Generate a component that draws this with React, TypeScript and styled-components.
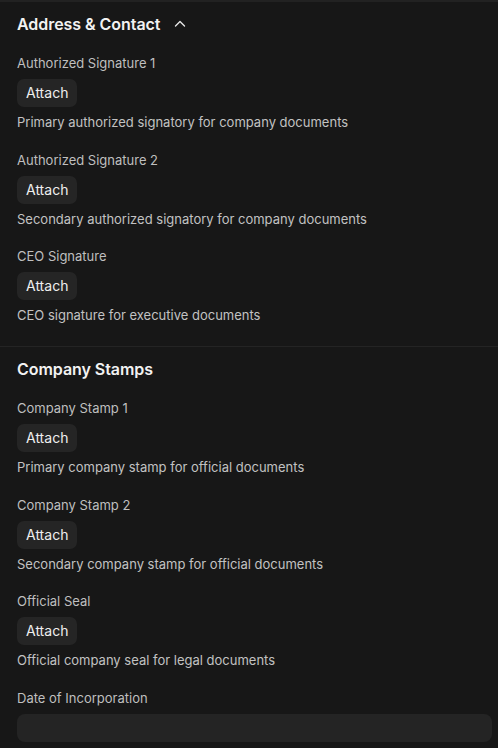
import React from "react";
import styled, { createGlobalStyle } from "styled-components";

const Global = createGlobalStyle`
  html, body { margin: 0; padding: 0; background: #171717; }
  body { font-family: Inter, "Noto Sans", sans-serif; -webkit-font-smoothing: antialiased; }
  * { box-sizing: border-box; }
`;

const Page = styled.div`
  min-height: 748px;
  background: #171717;
  border-top: 2px solid #222222;
`;

const Section = styled.section<{ $last?: boolean }>`
  display: flex;
  flex-direction: column;
  gap: 18px;
  padding: ${(p) => (p.$last ? "10px 6px 0 17px" : "10px 6px 22px 17px")};
  border-bottom: ${(p) => (p.$last ? "none" : "1px solid #242424")};
`;

const Header = styled.div`
  display: flex;
  align-items: center;
  gap: 13px;
  height: 24px;
`;

const Title = styled.h2`
  margin: 0;
  font-size: 16px;
  line-height: 24px;
  font-weight: 600;
  color: #f2f2f2;
  letter-spacing: -0.05px;
`;

const Fields = styled.div`
  display: flex;
  flex-direction: column;
  gap: 19.5px;
`;

const Field = styled.div`
  display: flex;
  flex-direction: column;
  align-items: flex-start;
`;

const Label = styled.label`
  font-size: 13px;
  line-height: 18px;
  color: #bfbfbf;
  margin-bottom: 7px;
`;

const AttachButton = styled.button`
  height: 28px;
  padding: 0 9px;
  border: none;
  border-radius: 7px;
  background: #252525;
  color: #eeeeee;
  font-family: inherit;
  font-size: 14px;
  line-height: 28px;
  cursor: pointer;
  margin-bottom: 6px;
`;

const Desc = styled.p`
  margin: 0;
  font-size: 13px;
  line-height: 18px;
  color: #c2c2c2;
`;

const DateInput = styled.input`
  width: 100%;
  height: 28px;
  border: none;
  border-radius: 8px;
  background: #242424;
  color: #eee;
  padding: 0 10px;
  font-family: inherit;
  font-size: 14px;
  outline: none;
`;

const Chevron = () => (
  <svg width="12" height="12" viewBox="0 0 12 12" fill="none" style={{ marginLeft: 1 }}>
    <path d="M1.5 8 L6 3.5 L10.5 8" stroke="#e6e6e6" strokeWidth="1.4" strokeLinecap="round" strokeLinejoin="round" />
  </svg>
);

type Item = { label: string; desc: string };

const signatures: Item[] = [
  { label: "Authorized Signature 1", desc: "Primary authorized signatory for company documents" },
  { label: "Authorized Signature 2", desc: "Secondary authorized signatory for company documents" },
  { label: "CEO Signature", desc: "CEO signature for executive documents" },
];

const stamps: Item[] = [
  { label: "Company Stamp 1", desc: "Primary company stamp for official documents" },
  { label: "Company Stamp 2", desc: "Secondary company stamp for official documents" },
  { label: "Official Seal", desc: "Official company seal for legal documents" },
];

const AttachField = ({ label, desc }: Item) => (
  <Field>
    <Label>{label}</Label>
    <AttachButton>Attach</AttachButton>
    <Desc>{desc}</Desc>
  </Field>
);

export default function App() {
  return (
    <Page>
      <Global />
      <Section>
        <Header>
          <Title>Address &amp; Contact</Title>
          <Chevron />
        </Header>
        <Fields>
          {signatures.map((s) => (
            <AttachField key={s.label} {...s} />
          ))}
        </Fields>
      </Section>
      <Section $last>
        <Header>
          <Title>Company Stamps</Title>
        </Header>
        <Fields>
          {stamps.map((s) => (
            <AttachField key={s.label} {...s} />
          ))}
          <Field>
            <Label>Date of Incorporation</Label>
            <DateInput type="text" />
          </Field>
        </Fields>
      </Section>
    </Page>
  );
}
